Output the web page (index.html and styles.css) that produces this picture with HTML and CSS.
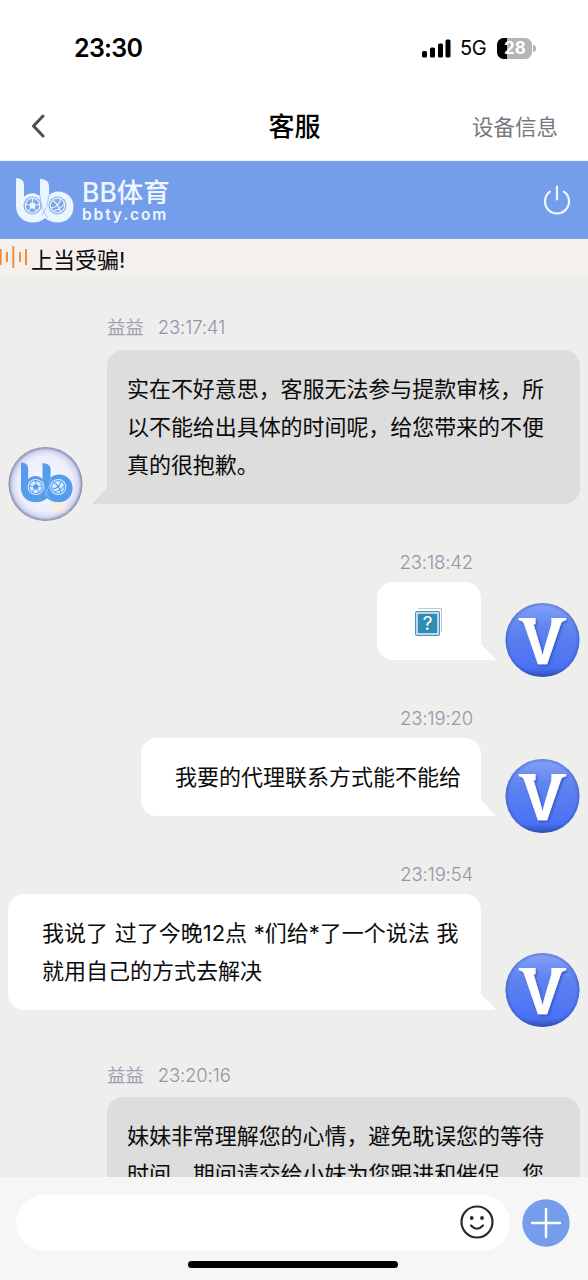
FILE: index.html
```html
<!DOCTYPE html>
<html lang="zh-CN">
<head>
<meta charset="utf-8">
<title>客服</title>
<link rel="stylesheet" href="styles.css">
</head>
<body>
<svg class="defs" aria-hidden="true">
  <defs>
    <linearGradient id="vFill" x1="0" y1="0" x2="0" y2="1"><stop offset="0" stop-color="#86a2f8"/><stop offset=".35" stop-color="#5f83ef"/><stop offset=".87" stop-color="#4b72f5"/><stop offset="1" stop-color="#3352b8"/></linearGradient>
    <radialGradient id="vRim"><stop offset=".9" stop-color="#2848b0" stop-opacity="0"/><stop offset="1" stop-color="#2848b0" stop-opacity=".4"/></radialGradient>
    <radialGradient id="pearl"><stop offset="0" stop-color="#f7f8ff"/><stop offset=".75" stop-color="#eceefc"/><stop offset=".9" stop-color="#d3d6f0"/><stop offset="1" stop-color="#8487ad"/></radialGradient>
    <filter id="vShadow" x="-20%" y="-20%" width="150%" height="150%"><feDropShadow dx="1.5" dy="1.5" stdDeviation="1.3" flood-color="#2445ad" flood-opacity=".7"/></filter>
    <filter id="glow"><feGaussianBlur stdDeviation="2.5"/></filter>
    <symbol id="mark" viewBox="0 0 58 45">
      <path d="M0 .3C4 .3 8 2 8 6.500V19Q12 14.500 19 15.500L24 18V1C29 1 33 3 33 8V17Q37 13.500 42 13.500C51 13.500 57.500 20 57.500 28.500C57.500 38 51 44.500 42 44.500C36.500 44.500 33 43 29 40Q24 44.500 17 44.500C7 44.500 0 38 0 28Z" fill="currentColor"/>
      <path class="fold" d="M24 17C25 27 27 34 32 40M26 37Q31 32 33 17"/>
      <g class="mark-ball">
        <circle cx="16.500" cy="27.500" r="9"/><circle cx="41.500" cy="27.500" r="9"/>
      </g>
      <g fill="none" stroke="currentColor" stroke-width="1.2">
        <circle cx="16.500" cy="27.500" r="7.300"/><circle cx="41.500" cy="27.500" r="7.300"/>
        <path d="M35 30Q43 29 44.500 21M37.500 33Q45 31 48.500 25.500M37 22.500Q43 27 44.500 34"/>
        <path d="M16.500 20.500v3M9.500 26l3 1M23.500 26l-3 1M12.500 33l2-2.500M20.500 33l-2-2.500"/>
      </g>
      <path d="M16.500 23.800l3.500 2.600-1.300 4h-4.400l-1.300-4Z" fill="currentColor"/>
    </symbol>
    <symbol id="userFace" viewBox="0 0 76 76">
      <circle cx="38" cy="38" r="37.500" fill="url(#vFill)"/>
      <circle cx="38" cy="38" r="37.500" fill="url(#vRim)"/>
      <g filter="url(#vShadow)" fill="#fff">
        <text class="v-letter" x="38" y="62" text-anchor="middle" textLength="41" lengthAdjust="spacingAndGlyphs">V</text>
        <path d="M14 15.800H31V22H20Q18 18.500 14 18ZM47 15.800H62V18Q58 18.500 56 22H47Z"/>
      </g>
    </symbol>
  </defs>
</svg>
<div class="screen">
  <div class="status">
    <span class="clock">23:30</span>
    <div class="indicators">
      <svg class="signal" viewBox="0 0 29 19"><rect x="0" y="12" width="5" height="6.500" rx="1.500"/><rect x="8" y="8.500" width="5" height="10" rx="1.500"/><rect x="16" y="4.500" width="5" height="14" rx="1.500"/><rect x="23.500" y=".5" width="5" height="18" rx="1.500"/></svg>
      <span class="network">5G</span>
      <span class="battery"><span class="level">28</span><i class="cap"></i></span>
    </div>
  </div>
  <div class="nav">
    <svg class="back" viewBox="0 0 14 24"><path d="M12 2L2.500 12L12 22"/></svg>
    <h1 class="title">客服</h1>
    <span class="device">设备信息</span>
  </div>
  <div class="brandbar">
    <svg class="brandmark"><use href="#mark"/></svg>
    <div class="brandtext"><span class="brandname">BB体育</span><span class="domain">bbty.com</span></div>
    <svg class="power" viewBox="0 0 28 30"><path d="M7 6.700A12 12 0 1 0 21 6.700M14 1.500V14.500"/></svg>
  </div>
  <div class="notice">
    <svg class="wave" viewBox="0 0 28 24"><path d="M.7 4V20M7 7V17M13.300 1V23M20 7V17M26 4V20"/></svg>
    <span>上当受骗!</span>
  </div>
  <div class="chat">
    <div class="msg agent">
      <svg class="avatar" viewBox="0 0 76 76"><circle cx="38" cy="38" r="37.500" fill="url(#pearl)"/><ellipse cx="51" cy="62" rx="9" ry="4" fill="#faf0d8" filter="url(#glow)"/><svg class="mini-mark" x="13" y="16" width="53" height="41"><use href="#mark"/></svg></svg>
      <div class="body"><div class="meta"><span class="name">益益</span><span>23:17:41</span></div><div class="bubble">实在不好意思，客服无法参与提款审核，所<br>以不能给出具体的时间呢，给您带来的不便<br>真的很抱歉。</div></div>
    </div>
    <div class="msg user">
      <div class="body"><div class="meta">23:18:42</div><div class="bubble picture"><svg class="missing" viewBox="0 0 30 30"><path d="M5 1.500H28.500V25" fill="none" stroke="#b9c8d2"/><rect x="2" y="4" width="25" height="25" rx="2" fill="#4695ba"/><rect x="4" y="6" width="21" height="21" fill="#308bb5" stroke="#fff" stroke-width="1.300"/><text x="14.500" y="23" text-anchor="middle">?</text></svg></div></div>
      <svg class="avatar"><use href="#userFace"/></svg>
    </div>
    <div class="msg user">
      <div class="body"><div class="meta">23:19:20</div><div class="bubble">我要的代理联系方式能不能给</div></div>
      <svg class="avatar"><use href="#userFace"/></svg>
    </div>
    <div class="msg user">
      <div class="body"><div class="meta">23:19:54</div><div class="bubble wide">我说了 过了今晚12点 *们给*了一个说法 我<br>就用自己的方式去解决</div></div>
      <svg class="avatar"><use href="#userFace"/></svg>
    </div>
    <div class="msg agent next">
      <div class="avatar"></div>
      <div class="body"><div class="meta"><span class="name">益益</span><span>23:20:16</span></div><div class="bubble">妹妹非常理解您的心情，避免耽误您的等待<br>时间，期间请交给小妹为您跟进和催促，您</div></div>
    </div>
  </div>
  <div class="composer">
    <div class="row">
      <div class="field"><svg class="smile" viewBox="0 0 34 34"><circle cx="17" cy="17" r="15.500"/><path d="M11 20.500Q17 27 23 20.500"/><circle class="eye" cx="11.700" cy="13" r="1.900"/><circle class="eye" cx="22" cy="13" r="1.900"/></svg></div>
      <svg class="plus" viewBox="0 0 48 48"><circle cx="24" cy="24" r="23.700"/><path d="M10 24H38M24 10V38"/></svg>
    </div>
    <div class="home"></div>
  </div>
</div>
</body>
</html>
```

FILE: styles.css
```css
* { box-sizing: border-box; }
body { margin: 0; font-family: Inter, "Noto Sans CJK SC", sans-serif; color: #0b0b0b; }
.defs { position: absolute; width: 0; height: 0; }
.screen { width: 588px; height: 1280px; display: flex; flex-direction: column; overflow: hidden; background: #fff; }

.status { height: 94px; flex: none; display: flex; justify-content: space-between; align-items: center; padding: 2px 52px 0 74px; color: #000; }
.clock { font-size: 25px; font-weight: 600; letter-spacing: -.7px; }
.indicators { display: flex; align-items: center; }
.signal { width: 29px; height: 19px; margin-right: 9px; }
.network { font-size: 20px; letter-spacing: -.3px; width: 37px; }
.battery { display: flex; align-items: center; gap: 1px; }
.level { width: 35px; height: 21px; border-radius: 6.5px; background: linear-gradient(90deg, #000 0 10px, #b5b5b5 10px); color: #fff; font-size: 17px; font-weight: 700; line-height: 21px; text-align: center; padding-left: 1px; }
.cap { width: 3px; height: 7px; border-radius: 0 3px 3px 0; background: #b5b5b5; }

.nav { height: 67px; flex: none; display: grid; grid-template-columns: 1fr auto 1fr; align-items: center; padding: 0 30px 0 31px; border-bottom: 1px solid #e9f8f9; }
.back { width: 14px; height: 24px; margin-top: -2px; fill: none; stroke: #4b4d59; stroke-width: 3; stroke-linecap: round; stroke-linejoin: round; }
.title { margin: 0; font-size: 26px; font-weight: 500; color: #000; line-height: 36px; }
.device { justify-self: end; font-size: 21.5px; color: #77777f; font-weight: 400; line-height: 32px; }

.brandbar { height: 78px; flex: none; background: #749eeb; display: flex; align-items: center; padding: 0 17px 0 16px; color: #eef7ff; }
.brandmark { width: 58px; height: 45px; color: #eaf5ff; --ball: #80a7e7; --fold: #a9c5f3; }
.mark-ball { fill: var(--ball); }
.fold { fill: none; stroke: var(--fold); stroke-width: 1; }
.brandtext { display: flex; flex-direction: column; margin-left: 8px; padding-top: 1px; }
.brandname { font-size: 26.5px; line-height: 28px; font-weight: 500; letter-spacing: 0; }
.domain { font-size: 15.5px; line-height: 18px; font-weight: 600; letter-spacing: 1.9px; }
.power { width: 28px; height: 30px; margin-left: auto; fill: none; stroke: #eef8ff; stroke-width: 2.2; stroke-linecap: round; }

.notice { height: 39px; flex: none; background: #f5f0ee; display: flex; align-items: center; font-size: 22px; gap: 3px; line-height: 34px; padding-top: 2px; }
.wave { width: 28px; height: 24px; fill: none; stroke: #f08c32; stroke-width: 1.9; margin-top: -5px; }

.chat { height: 899px; flex: none; overflow: hidden; background: #eeeeec; padding: 37px 8px 0; display: flex; flex-direction: column; gap: 28px; }
.msg { display: flex; align-items: flex-end; gap: 24px; flex: none; }
.msg.user { justify-content: flex-end; }
.msg.next { margin-top: 7px; }
.avatar { width: 75px; height: 76px; flex: none; display: block; }
.mini-mark { color: #559cec; --ball: #d9efff; --fold: #8cc2f8; }
.v-letter { font-family: "Liberation Sans", sans-serif; font-size: 66px; font-weight: 700; stroke: #fff; stroke-width: .6px; }
.body { padding-bottom: 18px; }
.meta { display: flex; gap: 14px; height: 24px; line-height: 24px; font-size: 18.5px; font-weight: 300; color: #9694a9; letter-spacing: -.15px; }
.name { font-weight: 400; color: #a09eb2; }
.user .meta { justify-content: flex-end; padding-right: 8px; margin-bottom: 8px; }
.agent .meta { margin-bottom: 11px; }
.bubble { position: relative; padding: 20px; border-radius: 16px; font-size: 22px; line-height: 38px; letter-spacing: -.06px; white-space: nowrap; }
.bubble::after { content: ""; position: absolute; bottom: 0; width: 31px; height: 16px; }
.agent .bubble { width: 473px; background: #ddd; }
.agent .bubble::after { left: -15px; background: #ddd; clip-path: polygon(0 100%, 15px 0, 100% 0, 100% 100%); }
.agent .bubble::after { width: 32px; }
.user .bubble { width: 340px; margin-left: auto; padding-left: 34px; background: #fff; letter-spacing: 0; }
.user .bubble::after { right: -15px; background: #fff; clip-path: polygon(0 0, 16px 0, 100% 100%, 0 100%); }
.user .bubble.picture { width: 104px; height: 78px; padding: 25px 0 0 36px; line-height: 0; }
.user .bubble.wide { width: 473px; word-spacing: .5px; }
.missing { width: 30px; height: 30px; }
.missing text { font: 19px Inter, sans-serif; fill: #fff; }
.agent.next { align-items: flex-start; }
.agent.next .meta { margin-bottom: 10px; }
.agent.next .bubble::after { display: none; }

.composer { height: 103px; flex: none; background: #f6f6f6; padding: 18px 18px 0 16px; display: flex; flex-direction: column; align-items: center; }
.row { width: 100%; display: flex; align-items: center; gap: 12px; }
.field { width: 494px; height: 56px; border-radius: 28px; background: #fff; display: flex; justify-content: flex-end; align-items: center; padding: 0 16px 2px 0; }
.smile { width: 34px; height: 34px; fill: none; stroke: #292929; stroke-width: 2.2; stroke-linecap: round; }
.smile .eye { fill: #292929; stroke: none; }
.plus { width: 48px; height: 48px; fill: #749eeb; }
.plus path { stroke: #fff; stroke-width: 2.4; stroke-linecap: round; }
.home { width: 210px; height: 7px; border-radius: 4px; background: #000; margin-top: 10px; }
```
